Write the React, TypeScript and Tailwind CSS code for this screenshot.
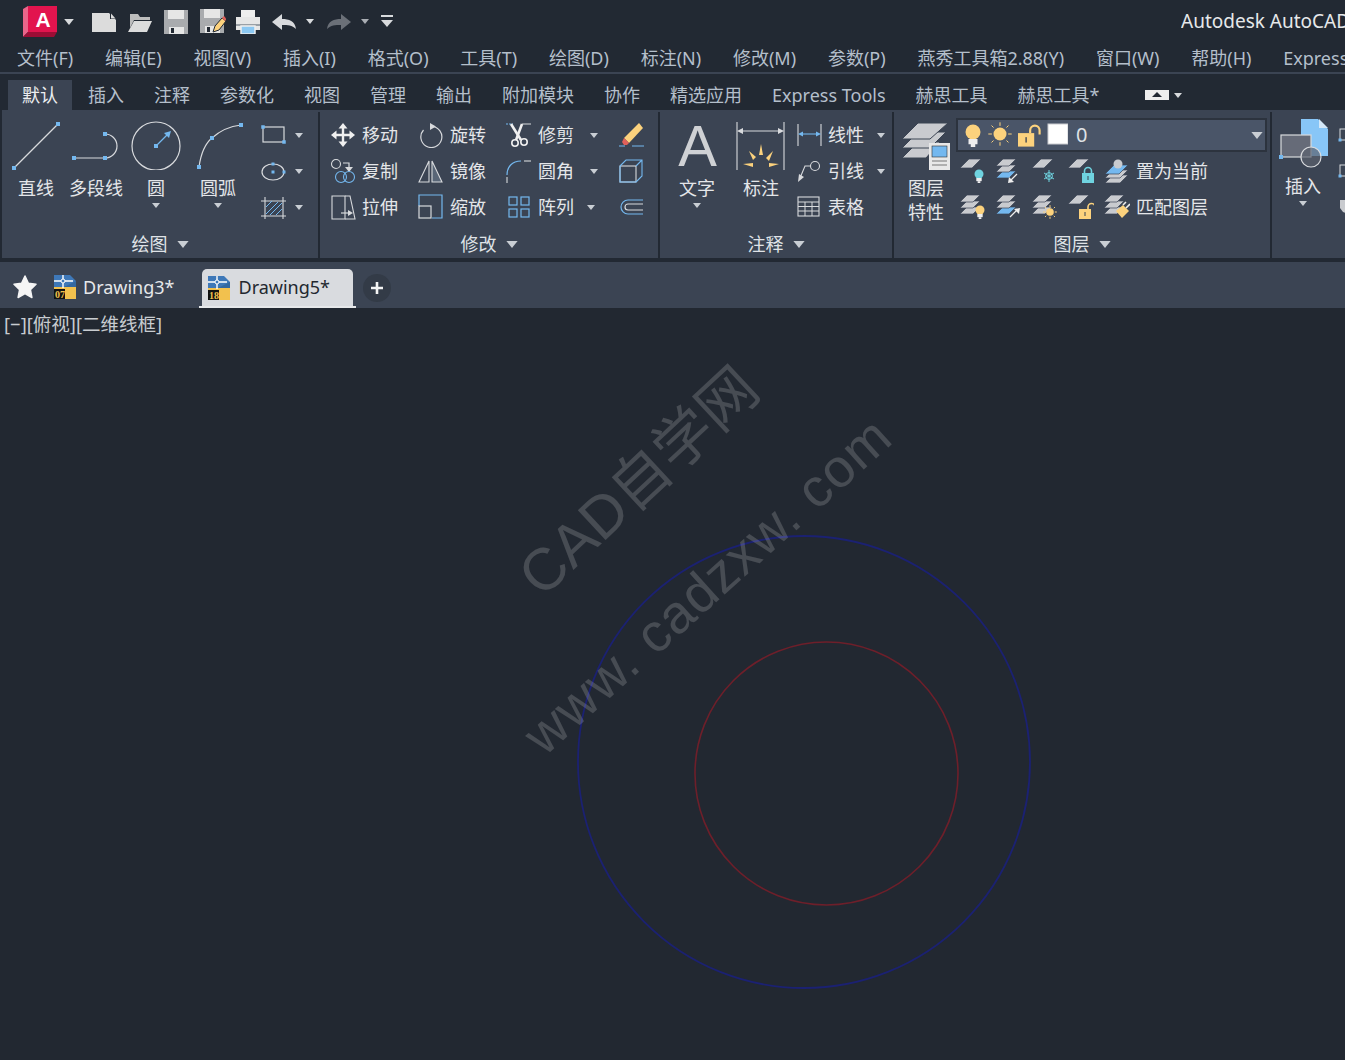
import type { ReactNode } from 'react';

const W = '#d8dadd';
const B = '#74b8ef';
const Y = '#fcd27d';
const C = '#6fd3e0';
const G = '#c9cbcf';
const PANEL = '#3b4453';

const Ico = ({ w = 26, h = 26, children }: { w?: number; h?: number; children: ReactNode }) => (
  <svg width={w} height={h} viewBox={`0 0 ${w} ${h}`} fill="none" className="block shrink-0">
    {children}
  </svg>
);

const Grip = ({ x, y, s = 4 }: { x: number; y: number; s?: number }) => (
  <rect x={x - s / 2} y={y - s / 2} width={s} height={s} fill={B} />
);

const Caret = ({ w = 8, h = 5, color = '#c9ced4' }: { w?: number; h?: number; color?: string }) => (
  <svg width={w} height={h} viewBox="0 0 8 5" className="block shrink-0">
    <polygon points="0,0 8,0 4,5" fill={color} />
  </svg>
);

// --- top bar ---
const Logo = () => (
  <svg width={36} height={32} viewBox="0 0 36 32" className="block shrink-0 relative">
    <polygon points="0,3 5,0 5,26 0,31" fill="#e9658a" />
    <polygon points="0,31 5,26 34,26 31,31" fill="#9c0d35" />
    <rect x={5} y={0} width={29} height={26} fill="#e2144e" />
    <text x={20} y={21} textAnchor="middle" fontSize={21} fontWeight={700} fill="#fff" fontFamily="Liberation Sans, sans-serif">A</text>
  </svg>
);

const QatNew = () => (
  <Ico w={24} h={24}><path d="M0 3H17L24 10V22H0Z" fill="#dcdcdc" /><path d="M18 3L24 9H18Z" fill="#222933" /><path d="M19 3.5L23.5 8.5H19Z" fill="#dcdcdc" /></Ico>
);
const QatOpen = () => (
  <Ico w={24} h={24}>
    <path d="M2 4H10L12 7H22V10H6L2 18Z" fill="#bdbdbd" />
    <path d="M6 11H24L19 22H0Z" fill="#dcdcdc" />
  </Ico>
);
const Floppy = () => (
  <>
    <path d="M0 0H24V24H0Z" fill="#a9abae" />
    <rect x={4} y={0} width={16} height={9} fill="#e6e6e6" />
    <rect x={5} y={17} width={15} height={7} fill="#e6e6e6" />
    <rect x={7} y={18} width={3} height={5} fill="#222933" />
  </>
);
const QatSave = () => <Ico w={24} h={24}><Floppy /></Ico>;
const QatSaveAs = () => (
  <Ico w={26} h={26}>
    <Floppy />
    <path d="M13 23L15 17L22 9L26 12L19 21Z" fill={Y} stroke="#222933" strokeWidth={1} />
    <path d="M22 9L24 7L26.5 10L25 12Z" fill="#e0605a" />
  </Ico>
);
const QatPrint = () => (
  <Ico w={24} h={24}>
    <rect x={5} y={0} width={14} height={8} fill="#eee" />
    <path d="M0 7H24V20H0Z" fill="#e6e6e6" />
    <rect x={0} y={14} width={24} height={2} fill="#9aa0a6" />
    <rect x={5} y={16} width={14} height={8} fill="#8cc8f2" stroke="#eee" strokeWidth={1.5} />
  </Ico>
);
const QatUndo = ({ color, flip }: { color: string; flip?: boolean }) => (
  <Ico w={24} h={16}>
    <g transform={flip ? 'translate(24,0) scale(-1,1)' : undefined}>
      <path d="M0 8L10 0V5C17 5 23 7 24 15C20 11 16 11 10 11V16Z" fill={color} />
    </g>
  </Ico>
);
const QatMore = () => (
  <Ico w={12} h={13}>
    <rect x={0} y={0} width={12} height={2} fill={W} />
    <polygon points="0,5 12,5 6,12" fill={W} />
  </Ico>
);

// --- draw panel ---
const LineIco = () => <Ico w={52} h={52}><path d="M4 50L48 6" stroke={W} strokeWidth={1.2} /><Grip x={4} y={50} /><Grip x={48} y={6} /></Ico>;
const PlineIco = () => (
  <Ico w={52} h={52}><path d="M4 40H35A12 12 0 0 0 35 16" stroke={W} strokeWidth={1.2} /><Grip x={4} y={40} /><Grip x={35} y={40} /><Grip x={35} y={16} /></Ico>
);
const CircleIco = () => (
  <Ico w={52} h={52}>
    <circle cx={26} cy={28} r={24} stroke={W} strokeWidth={1.2} />
    <path d="M26 28L38 16" stroke={B} strokeWidth={1.2} />
    <polygon points="41,13 39,20 34,15" fill={B} />
    <Grip x={26} y={28} />
  </Ico>
);
const ArcIco = () => (
  <Ico w={52} h={52}><path d="M7 49Q10 28 20 20Q32 9 49 7" stroke={W} strokeWidth={1.2} /><Grip x={7} y={49} /><Grip x={20} y={20} /><Grip x={49} y={7} /></Ico>
);
const RectIco = () => (
  <Ico><rect x={3} y={5} width={21} height={15} stroke={W} strokeWidth={1.2} /><Grip x={3} y={5} s={3.5} /><Grip x={24} y={20} s={3.5} /></Ico>
);
const EllipseIco = () => (
  <Ico><ellipse cx={13} cy={14} rx={11} ry={8} stroke={W} strokeWidth={1.2} /><Grip x={13} y={14} s={3} /><Grip x={13} y={6} s={3} /><Grip x={24} y={14} s={3} /></Ico>
);
const HatchIco = () => (
  <Ico>
    <path d="M5 3V25M23 3V25M1 7H27M1 22H27" stroke={W} strokeWidth={1.1} />
    <path d="M6 13L12 7M6 20L18 8M10 21L22 9M16 21L22 15" stroke={B} strokeWidth={1} />
  </Ico>
);

// --- modify panel ---
const MoveIco = () => (
  <Ico>
    <path d="M13 5V21M5 13H21" stroke="#f0f0f0" strokeWidth={2.4} />
    <polygon points="13,1 17.5,6.5 8.5,6.5" fill="#f0f0f0" />
    <polygon points="13,25 17.5,19.5 8.5,19.5" fill="#f0f0f0" />
    <polygon points="1,13 6.5,8.5 6.5,17.5" fill="#f0f0f0" />
    <polygon points="25,13 19.5,8.5 19.5,17.5" fill="#f0f0f0" />
  </Ico>
);
const RotateIco = () => (
  <Ico>
    <path d="M14 4.5A10.5 10.5 0 1 1 5.5 8" stroke={W} strokeWidth={1.2} />
    <polygon points="18,4.5 12,1 12,8" fill={W} />
  </Ico>
);
const TrimIco = () => (
  <Ico w={26} h={28}>
    <path d="M0 3H7" stroke={B} strokeWidth={1} strokeDasharray="2 1" />
    <path d="M16 3H25" stroke={W} strokeWidth={1} />
    <path d="M5 3L15 19" stroke="#f0f0f0" strokeWidth={2.6} />
    <path d="M16 3L10 19" stroke="#f0f0f0" strokeWidth={2.6} />
    <circle cx={9} cy={22} r={3.2} stroke="#f0f0f0" strokeWidth={1.6} />
    <circle cx={18} cy={21} r={3.2} stroke="#f0f0f0" strokeWidth={1.6} />
  </Ico>
);
const EraserIco = () => (
  <Ico>
    <path d="M1 24H7M14 24H26" stroke={B} strokeWidth={1.1} />
    <path d="M6 16L21 1L25 6L11 21Z" fill={Y} />
    <path d="M6 16L11 21L9 23H6L4 20Z" fill="#e0605a" />
  </Ico>
);
const CopyIco = () => (
  <Ico>
    <circle cx={6} cy={6} r={4.5} stroke={W} strokeWidth={1.1} />
    <path d="M13 5H19V10" stroke={W} strokeWidth={1.2} />
    <polygon points="15,9 23,9 19,14" fill={W} />
    <circle cx={11} cy={19} r={5.5} stroke={B} strokeWidth={1.1} />
    <circle cx={19} cy={19} r={5.5} stroke={B} strokeWidth={1.1} />
  </Ico>
);
const MirrorIco = () => (
  <Ico>
    <polygon points="11,3 11,24 1,24" stroke={W} strokeWidth={1.1} />
    <polygon points="14,3 14,24 24,24" fill="#596677" stroke={W} strokeWidth={1.1} />
  </Ico>
);
const FilletIco = () => (
  <Ico>
    <path d="M1 25V19" stroke={W} strokeWidth={1.1} />
    <path d="M1 17C1 9 6 3 15 3" stroke={B} strokeWidth={1.2} />
    <path d="M18 3H25" stroke={W} strokeWidth={1.1} />
  </Ico>
);
const BoxIco = () => (
  <Ico>
    <rect x={2} y={8} width={16} height={16} stroke={W} strokeWidth={1.1} />
    <path d="M2 8L8 2H24V18L18 24M18 8L24 2" stroke={B} strokeWidth={1.1} />
    <path d="M2 8V24H18" stroke={B} strokeWidth={1.1} />
  </Ico>
);
const StretchIco = () => (
  <Ico>
    <path d="M2 2H15V25H2Z" stroke={W} strokeWidth={1.1} />
    <path d="M15 2H20L25 25H15" stroke={W} strokeWidth={1.1} />
    <path d="M11 19H19" stroke={W} strokeWidth={1.2} />
    <polygon points="23,19 18,16 18,22" fill={W} />
  </Ico>
);
const ScaleIco = () => (
  <Ico>
    <path d="M1 12V1H24V24H14" stroke={B} strokeWidth={1.2} />
    <rect x={1} y={12} width={12} height={12} stroke={W} strokeWidth={1.2} />
  </Ico>
);
const ArrayIco = () => (
  <Ico>
    <rect x={3} y={3} width={8} height={8} stroke={B} strokeWidth={1.2} />
    <rect x={15} y={3} width={8} height={8} stroke={B} strokeWidth={1.2} />
    <rect x={3} y={15} width={8} height={8} stroke={B} strokeWidth={1.2} />
    <rect x={15} y={15} width={8} height={8} stroke={B} strokeWidth={1.2} />
  </Ico>
);
const OffsetIco = () => (
  <Ico>
    <path d="M25 6H10A7 7 0 0 0 10 20H25" stroke={B} strokeWidth={1.2} />
    <path d="M25 10H10A3 3 0 0 0 10 16H25" stroke={W} strokeWidth={1.2} />
  </Ico>
);

// --- annotation panel ---
const DimIco = () => (
  <Ico w={52} h={52}>
    <path d="M2 4V52M49 4V52" stroke={W} strokeWidth={1.1} />
    <path d="M7 13H44" stroke={W} strokeWidth={1.1} />
    <polygon points="2,13 8,10 8,16" fill={W} />
    <polygon points="49,13 43,10 43,16" fill={W} />
    <polygon points="26,26 28,37 24,37" fill={Y} />
    <polygon points="14,33 21,39 18,42" fill={Y} />
    <polygon points="38,33 34,43 31,40" fill={Y} />
    <polygon points="8,46 18,45 18,49" fill={Y} />
    <polygon points="44,46 34,45 34,49" fill={Y} />
  </Ico>
);
const LinearIco = () => (
  <Ico>
    <path d="M2 2V24M25 2V24" stroke={W} strokeWidth={1.1} />
    <path d="M5 12H22" stroke={B} strokeWidth={1.1} />
    <polygon points="2,12 7,9.5 7,14.5" fill={B} />
    <polygon points="25,12 20,9.5 20,14.5" fill={B} />
  </Ico>
);
const LeaderIco = () => (
  <Ico>
    <circle cx={19} cy={8} r={4.5} stroke={W} strokeWidth={1.1} />
    <path d="M14.5 8H9L4 20" stroke={W} strokeWidth={1.1} />
    <polygon points="2,24 3,16 8,19" fill={W} />
  </Ico>
);
const TableIco = () => (
  <Ico>
    <rect x={2} y={3} width={21} height={19} stroke={W} strokeWidth={1.1} />
    <path d="M2 8H23M2 12.5H23M2 17H23M9 8V22M16 8V22" stroke={W} strokeWidth={1} />
  </Ico>
);

// --- layer panel ---
const Plane = ({ y, h = 9, fill = G, x = 0, w = 21 }: { y: number; h?: number; fill?: string; x?: number; w?: number }) => {
  const s = Math.round(h);
  return (
    <polygon
      points={`${x + s},${y} ${x + w},${y} ${x + w - s},${y + h} ${x},${y + h}`}
      fill={fill}
      stroke={PANEL}
      strokeWidth={0.7}
    />
  );
};
const Stack = ({ mid = G }: { mid?: string }) => (
  <>
    <Plane y={13} h={7} w={20} fill={mid} />
    <Plane y={7} h={7} w={20} />
    <Plane y={1} h={7} w={20} />
  </>
);
const Bulb = ({ cx, cy, r = 4.5, color = Y }: { cx: number; cy: number; r?: number; color?: string }) => (
  <>
    <circle cx={cx} cy={cy} r={r} fill={color} />
    <rect x={cx - r * 0.6} y={cy + r - 0.5} width={r * 1.2} height={r * 0.7} fill="#eee" />
    <rect x={cx - r * 0.3} y={cy + r * 1.6} width={r * 0.6} height={r * 0.4} fill="#eee" />
  </>
);
const Sun = ({ cx, cy, r = 5 }: { cx: number; cy: number; r?: number }) => (
  <>
    <circle cx={cx} cy={cy} r={r} fill={Y} />
    <path
      d={`M${cx} ${cy - r * 1.8}V${cy - r * 1.25}M${cx} ${cy + r * 1.25}V${cy + r * 1.8}M${cx - r * 1.8} ${cy}H${cx - r * 1.25}M${cx + r * 1.25} ${cy}H${cx + r * 1.8}M${cx - r * 1.3} ${cy - r * 1.3}L${cx - r} ${cy - r}M${cx + r * 1.3} ${cy - r * 1.3}L${cx + r} ${cy - r}M${cx - r * 1.3} ${cy + r * 1.3}L${cx - r} ${cy + r}M${cx + r * 1.3} ${cy + r * 1.3}L${cx + r} ${cy + r}`}
      stroke={Y}
      strokeWidth={1}
    />
  </>
);
const Lock = ({ x, y, s = 1, color, open }: { x: number; y: number; s?: number; color: string; open?: boolean }) => (
  <g transform={`translate(${x},${y}) scale(${s})`}>
    {open ? (
      <path d="M9 6V4A3.5 3.5 0 0 1 16 4V7" stroke={color} strokeWidth={1.6} />
    ) : (
      <path d="M2.5 6V4A3.5 3.5 0 0 1 9.5 4V6" stroke={color} strokeWidth={1.6} />
    )}
    <rect x={0} y={6} width={12} height={10} fill={color} />
    <rect x={5.5} y={9} width={1} height={4} fill={PANEL} />
  </g>
);

const LayerPropsIco = () => (
  <Ico w={52} h={52}>
    <polygon points="18,24 40,24 26,40 2,40" fill={G} stroke={PANEL} />
    <polygon points="18,14 46,14 30,30 2,30" fill={G} stroke={PANEL} />
    <polygon points="18,5 48,5 30,21 2,21" fill={G} stroke={PANEL} />
    <rect x={29} y={25} width={21} height={27} fill="#e8e8e8" />
    <rect x={32} y={28} width={15} height={11} fill={B} stroke="#333" strokeWidth={0.6} />
    <path d="M32 43H47M32 47H47" stroke="#777" strokeWidth={1} />
  </Ico>
);
const LOff = () => <Ico><Plane y={1} /><Bulb cx={19} cy={16} r={4.5} color={C} /></Ico>;
const LIso = () => (
  <Ico>
    <Stack mid={B} />
    <path d="M21 16L14 23" stroke="#eee" strokeWidth={1.3} />
    <polygon points="12,25 13,19 18,24" fill="#eee" />
  </Ico>
);
const LFreeze = () => (
  <Ico>
    <Plane y={1} />
    <path d="M17 12V24M12 15L22 21M22 15L12 21" stroke={C} strokeWidth={1} />
    <circle cx={17} cy={18} r={3.4} stroke={C} strokeWidth={1} />
  </Ico>
);
const LLockCyan = () => <Ico><Plane y={1} /><Lock x={14} y={9} color={C} /></Ico>;
const LCurrent = () => (
  <Ico>
    <Plane y={17} h={8} w={23} x={1} />
    <Plane y={12} h={8} w={23} x={1} />
    <Plane y={7} h={9} w={23} x={1} fill={B} />
    <circle cx={14} cy={6} r={4.5} fill={G} />
  </Ico>
);
const LOn = () => <Ico><Stack /><Bulb cx={20} cy={16} r={4.5} /></Ico>;
const LUniso = () => (
  <Ico>
    <Stack mid={B} />
    <path d="M14 23L21 16" stroke="#eee" strokeWidth={1.3} />
    <polygon points="24,14 23,20 18,15" fill="#eee" />
  </Ico>
);
const LThaw = () => <Ico><Stack /><Sun cx={18} cy={18} r={3.8} /></Ico>;
const LUnlock = () => <Ico><Plane y={1} /><Lock x={11} y={9} color={Y} open /></Ico>;
const LMatch = () => (
  <Ico>
    <Stack />
    <path d="M12 17L19 11L25 17L18 24Z" fill={Y} />
    <path d="M19 11L22 8M22 14L26 10" stroke="#eee" strokeWidth={1.6} />
  </Ico>
);
const InsertIco = () => (
  <Ico w={54} h={50}>
    <path d="M25 1H42L52 11V38H25Z" fill="#88c6f7" />
    <polygon points="43,1 52,10 43,10" fill="#d4e8f8" />
    <rect x={5} y={17} width={30} height={22} fill="#666b78" stroke={W} strokeWidth={1.2} />
    <circle cx={35} cy={39} r={10} fill="#5b616e" fillOpacity={0.7} stroke={W} strokeWidth={1.2} />
    <Grip x={5} y={39} />
  </Ico>
);

const DocIco = ({ num }: { num: string }) => (
  <svg width={22} height={24} viewBox="0 0 22 24" className="block shrink-0">
    <path d="M0 0H16L22 6V24H0Z" fill="#3e78b8" />
    <path d="M0 12H22V24H0Z" fill="#f2c14e" />
    <path d="M10 12H22L22 6Z" fill="#2f6196" opacity={0.7} />
    <rect x={0} y={14} width={11} height={10} fill="#111" />
    <path d="M9 0V13M0 6H19" stroke="#fff" strokeWidth={1.4} />
    <circle cx={9} cy={6} r={2} fill="#3e78b8" stroke="#fff" />
    <text x={1} y={23} fontSize={10} fontWeight={700} fill="#f2c14e" fontFamily="Liberation Serif, serif">{num}</text>
  </svg>
);

// --- ribbon bits ---
const LargeTool = ({ className, icon, label, caret }: { className: string; icon: ReactNode; label: ReactNode; caret?: boolean }) => (
  <div className={`flex flex-col items-center shrink-0 pt-[6px] ${className}`}>
    {icon}
    <div className="mt-[6px] text-center text-[18px] leading-[24px] text-[#e4e6e9] whitespace-nowrap">{label}</div>
    {caret && <div className="mt-[3px]"><Caret /></div>}
  </div>
);

const SmallTool = ({ className = '', icon, label, caret }: { className?: string; icon: ReactNode; label?: string; caret?: string }) => (
  <div className={`flex h-9 items-center gap-[6px] shrink-0 ${className}`}>
    {icon}
    {label && <span className="text-[18px] leading-[24px] text-[#e4e6e9] whitespace-nowrap">{label}</span>}
    {caret && <div className={caret}><Caret /></div>}
  </div>
);

const Panel = ({ className, title, children }: { className: string; title: string; children: ReactNode }) => (
  <div className={`flex flex-col shrink-0 mt-[2px] border-r-2 border-[#222933] ${className}`}>
    <div className="flex h-[118px]">{children}</div>
    <div className="flex h-[28px] items-center justify-center gap-[9px] text-[18px] text-[#dfe2e6]">
      {title}
      {title && <Caret w={12} h={7} />}
    </div>
  </div>
);

const menus = ['文件(F)', '编辑(E)', '视图(V)', '插入(I)', '格式(O)', '工具(T)', '绘图(D)', '标注(N)', '修改(M)', '参数(P)', '燕秀工具箱2.88(Y)', '窗口(W)', '帮助(H)', 'Express'];
const tabs = ['插入', '注释', '参数化', '视图', '管理', '输出', '附加模块', '协作', '精选应用', 'Express Tools', '赫思工具', '赫思工具*'];

export default function App() {
  return (
    <div className="w-[1345px] h-[1060px] overflow-hidden flex flex-col bg-[#222831] font-['Noto_Sans','Noto_Sans_CJK_SC',sans-serif]">
      {/* title bar */}
      <div className="flex h-[40px] shrink-0 items-center bg-[#222933] pt-[3px]">
        <div className="ml-[23px]"><Logo /></div>
        <div className="ml-[5px]"><Caret w={10} h={6} color={W} /></div>
        <div className="ml-[18px]"><QatNew /></div>
        <div className="ml-3"><QatOpen /></div>
        <div className="ml-3"><QatSave /></div>
        <div className="ml-3"><QatSaveAs /></div>
        <div className="ml-[10px]"><QatPrint /></div>
        <div className="ml-3"><QatUndo color={W} /></div>
        <div className="ml-[10px]"><Caret color={W} /></div>
        <div className="ml-[13px]"><QatUndo color="#6b7078" flip /></div>
        <div className="ml-[10px]"><Caret color="#a9adb3" /></div>
        <div className="ml-3"><QatMore /></div>
        <div className="ml-auto w-[164px] overflow-hidden whitespace-nowrap text-[19px] text-[#e6e8ea]">Autodesk AutoCAD</div>
      </div>

      {/* menu bar */}
      <div className="flex h-[34px] shrink-0 items-center gap-[31.8px] overflow-hidden border-b-2 border-[#3b4453] bg-[#222933] pl-[17px] pt-[4px] text-[18px] text-[#b4bfcb] whitespace-nowrap">
        {menus.map((m) => <span key={m}>{m}</span>)}
      </div>

      {/* ribbon tabs */}
      <div className="flex h-[36px] shrink-0 items-end overflow-hidden bg-[#222933] pl-[8px] text-[18px] text-[#b4bfcb] whitespace-nowrap">
        <div className="flex h-[30px] items-center bg-[#3b4453] px-[14px] text-[#eceef0]">默认</div>
        <div className="flex h-[30px] items-center gap-[30px] pl-[16px]">
          {tabs.map((t) => <span key={t}>{t}</span>)}
          <span className="ml-[16px] flex items-center gap-[5px]">
            <svg width={24} height={10} viewBox="0 0 24 10" className="block"><rect width={24} height={10} fill="#eee" /><polygon points="12,2 17,7 7,7" fill="#222933" /></svg>
            <Caret color={W} />
          </span>
        </div>
      </div>

      {/* ribbon */}
      <div className="flex h-[148px] shrink-0 overflow-hidden border-l-2 border-[#222933] bg-[#3b4453]">
        <Panel className="w-[318px]" title="绘图">
          <div className="flex pl-[4px]">
            <LargeTool className="w-[60px]" icon={<LineIco />} label="直线" />
            <LargeTool className="w-[60px]" icon={<PlineIco />} label="多段线" />
            <LargeTool className="w-[60px]" icon={<CircleIco />} label="圆" caret />
            <LargeTool className="w-[64px]" icon={<ArcIco />} label="圆弧" caret />
            <div className="ml-[10px] pt-[5px]">
              <SmallTool icon={<RectIco />} caret="ml-[3px]" />
              <SmallTool icon={<EllipseIco />} caret="ml-[3px]" />
              <SmallTool icon={<HatchIco />} caret="ml-[3px]" />
            </div>
          </div>
        </Panel>

        <Panel className="w-[340px]" title="修改">
          <div className="flex pl-[10px] pt-[5px]">
            <div className="w-[88px]">
              <SmallTool icon={<MoveIco />} label="移动" />
              <SmallTool icon={<CopyIco />} label="复制" />
              <SmallTool icon={<StretchIco />} label="拉伸" />
            </div>
            <div className="w-[88px]">
              <SmallTool icon={<RotateIco />} label="旋转" />
              <SmallTool icon={<MirrorIco />} label="镜像" />
              <SmallTool icon={<ScaleIco />} label="缩放" />
            </div>
            <div className="w-[112px]">
              <SmallTool icon={<TrimIco />} label="修剪" caret="ml-[10px]" />
              <SmallTool icon={<FilletIco />} label="圆角" caret="ml-[10px]" />
              <SmallTool icon={<ArrayIco />} label="阵列" caret="ml-[7px]" />
            </div>
            <div>
              <SmallTool icon={<EraserIco />} />
              <SmallTool icon={<BoxIco />} />
              <SmallTool icon={<OffsetIco />} />
            </div>
          </div>
        </Panel>

        <Panel className="w-[234px]" title="注释">
          <LargeTool
            className="w-[74px]"
            icon={<div className="flex h-[52px] items-center pl-[1px] pt-[4px] text-[58px] leading-none text-[#cfd1d4] font-['Liberation_Sans',sans-serif]">A</div>}
            label="文字"
            caret
          />
          <LargeTool className="w-[54px]" icon={<DimIco />} label="标注" />
          <div className="ml-[8px] pt-[5px]">
            <SmallTool icon={<LinearIco />} label="线性" caret="ml-[7px]" />
            <SmallTool icon={<LeaderIco />} label="引线" caret="ml-[7px]" />
            <SmallTool icon={<TableIco />} label="表格" />
          </div>
        </Panel>

        <Panel className="w-[378px]" title="图层">
          <div className="flex pl-[2px]">
            <LargeTool className="w-[60px]" icon={<LayerPropsIco />} label={<>图层<br />特性</>} />
            <div className="w-[311px] pt-[6px]">
              <div className="flex h-[34px] items-center border-2 border-[#2c333e] bg-[#4a5568] pl-[6px] pr-[2px]">
                <Ico w={104} h={26}>
                  <Bulb cx={9} cy={10} r={7.5} />
                  <Sun cx={36} cy={12} r={6.5} />
                  <Lock x={54} y={3} s={1.35} color={Y} open />
                  <rect x={84} y={2} width={20} height={20} fill="#fff" stroke="#c9cbcf" />
                </Ico>
                <span className="ml-[8px] text-[20px] text-[#dfe2e6]">0</span>
                <div className="ml-auto"><Caret w={12} h={7} /></div>
              </div>
              <div className="mt-px flex gap-[10px] pl-[4px]">
                <SmallTool icon={<LOff />} />
                <SmallTool icon={<LIso />} />
                <SmallTool icon={<LFreeze />} />
                <SmallTool icon={<LLockCyan />} />
                <SmallTool icon={<LCurrent />} label="置为当前" />
              </div>
              <div className="flex gap-[10px] pl-[4px]">
                <SmallTool icon={<LOn />} />
                <SmallTool icon={<LUniso />} />
                <SmallTool icon={<LThaw />} />
                <SmallTool icon={<LUnlock />} />
                <SmallTool icon={<LMatch />} label="匹配图层" />
              </div>
            </div>
          </div>
        </Panel>

        <div className="mt-[2px] flex shrink-0">
          <LargeTool className="w-[62px]" icon={<InsertIco />} label="插入" caret />
          <div className="ml-[4px] pt-[5px]">
            <SmallTool icon={<Ico w={10}><rect x={2} y={7} width={8} height={11} stroke={W} /><Grip x={2} y={18} s={3} /></Ico>} />
            <SmallTool icon={<Ico w={10}><rect x={2} y={7} width={8} height={11} stroke={W} /><Grip x={2} y={18} s={3} /></Ico>} />
            <SmallTool icon={<Ico w={10}><path d="M2 6H10V20L5 18L2 14Z" fill={G} /></Ico>} />
          </div>
        </div>
      </div>

      {/* separator + file tabs */}
      <div className="h-[4px] shrink-0 bg-[#222933]" />
      <div className="flex h-[46px] shrink-0 items-end bg-[#3b4453] pl-[13px]">
        <div className="flex h-[46px] items-center pt-[4px]">
          <svg width={24} height={24} viewBox="0 0 24 24" className="block"><path d="M12 1l3.4 7.3 7.6 1-5.6 5.4 1.5 7.8L12 18.6l-6.9 3.9 1.5-7.8L1 9.3l7.6-1z" fill="#f5f5f5" stroke="#f5f5f5" strokeWidth={1.5} strokeLinejoin="round" /></svg>
          <div className="ml-[17px]"><DocIco num="07" /></div>
          <span className="ml-[7px] text-[18px] text-[#e6e8ea]">Drawing3*</span>
        </div>
        <div className="ml-[24px] flex h-[39px] w-[157px] flex-col">
          <div className="mx-[3px] flex h-[37px] items-center rounded-t-[5px] bg-[#d9dbdf] pl-[6px]">
            <DocIco num="18" />
            <span className="ml-[9px] text-[18px] text-[#23282f]">Drawing5*</span>
          </div>
          <div className="h-[2px] bg-[#e6e8ea]" />
        </div>
        <div className="mb-[6px] ml-[7px] flex h-[28px] w-[28px] items-center justify-center rounded-full bg-[#333b47]">
          <svg width={12} height={12} viewBox="0 0 12 12" className="block"><path d="M6 0V12M0 6H12" stroke="#f4f4f4" strokeWidth={2.6} /></svg>
        </div>
      </div>

      {/* drawing area */}
      <div className="relative flex-1 bg-[#222831]">
        <svg width={1345} height={752} viewBox="0 308 1345 752" fill="none" className="absolute left-0 top-0 block">
          <circle cx={804} cy={762} r={226} stroke="#1b2172" strokeWidth={1.8} />
          <circle cx={826.5} cy={773.5} r={131.5} stroke="#6e1f2a" strokeWidth={1.6} />
        </svg>
        <div className="relative pl-[4px] pt-[3px] text-[18.5px] leading-[26px] text-[#c8ccd0]">[−][俯视][二维线框]</div>
        <div className="absolute left-[639px] top-[174px] -translate-x-1/2 -translate-y-1/2 -rotate-[43deg] whitespace-nowrap text-[59px] leading-none text-white/[0.17] font-['Liberation_Sans','Noto_Sans_CJK_SC',sans-serif]">CAD自学网</div>
        <div className="absolute left-[707px] top-[277px] -translate-x-1/2 -translate-y-1/2 -rotate-[42deg] whitespace-nowrap text-[54px] leading-none tracking-[1.2px] text-white/[0.17] font-['Liberation_Sans',sans-serif]">www. cadzxw. com</div>
      </div>
    </div>
  );
}
